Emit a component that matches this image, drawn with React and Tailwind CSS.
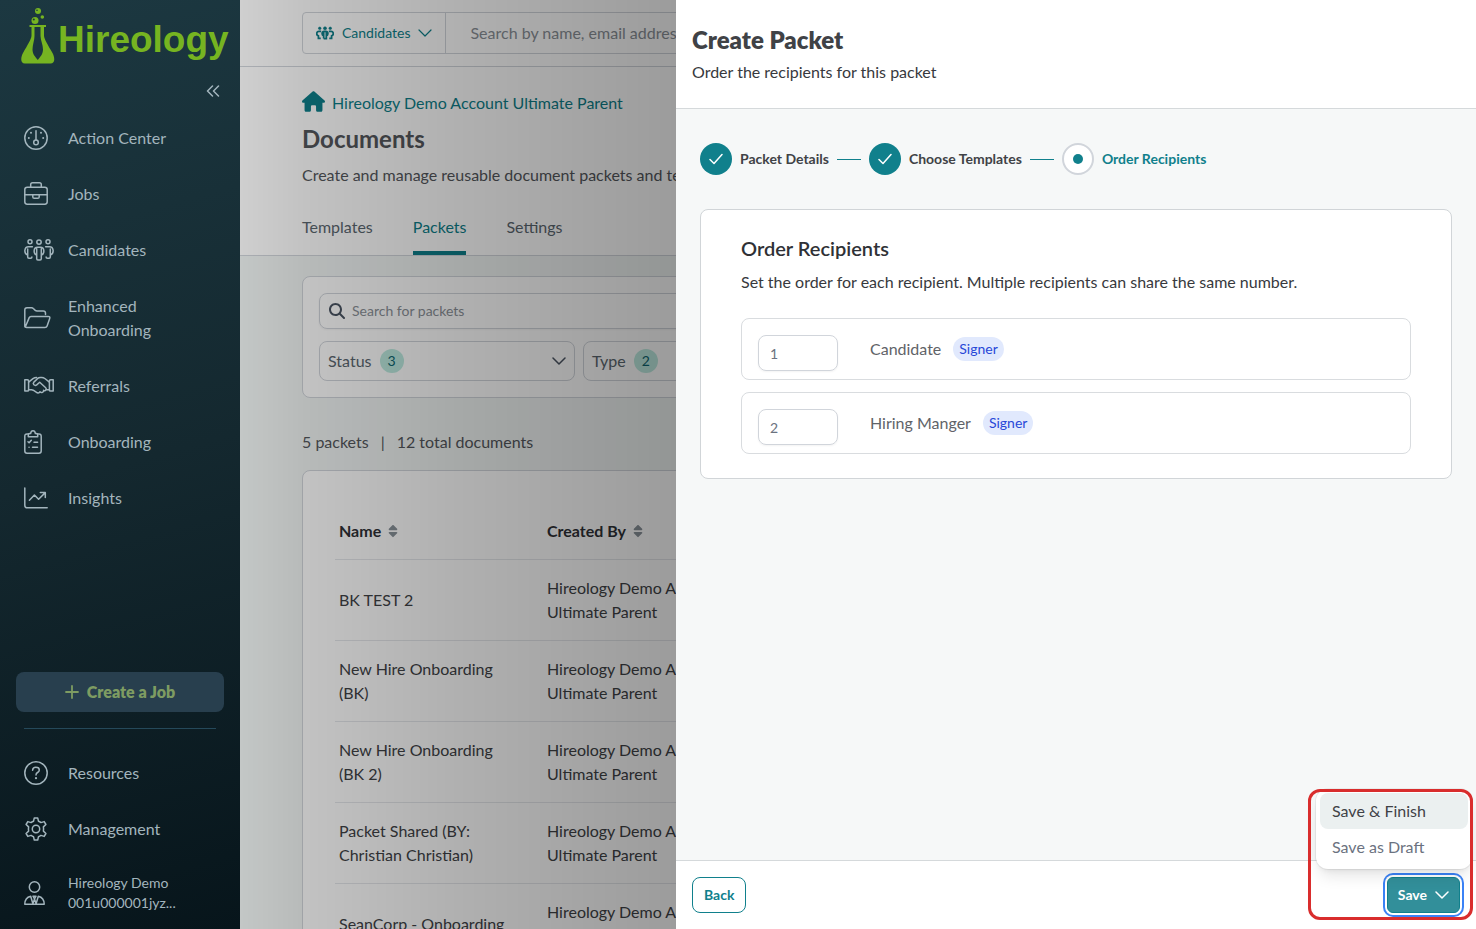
import React from "react";
import { FaHouse, FaMagnifyingGlass, FaSort } from "react-icons/fa6";

function Icon({ w, h, sw = 1.5, className = "", children }) {
  return (
    <svg
      width={w}
      height={h}
      viewBox={`0 0 ${w} ${h}`}
      fill="none"
      stroke="currentColor"
      strokeWidth={sw}
      strokeLinecap="round"
      strokeLinejoin="round"
      className={`shrink-0 ${className}`}
      aria-hidden="true"
    >
      {children}
    </svg>
  );
}

const GaugeIcon = () => (
  <Icon w={24} h={24}>
    <circle cx="12" cy="12" r="11.2" />
    <path d="M12 4.8v9" />
    <circle cx="12" cy="16.4" r="2.3" />
    <g fill="currentColor" stroke="none">
      <circle cx="7" cy="6.8" r="1" />
      <circle cx="17" cy="6.8" r="1" />
      <circle cx="4.8" cy="12" r="1" />
      <circle cx="19.2" cy="12" r="1" />
    </g>
  </Icon>
);

const BriefcaseIcon = () => (
  <Icon w={24} h={24}>
    <rect x="0.8" y="5.2" width="22.4" height="17" rx="2.4" />
    <path d="M6.7 5.2V2.600q0-1.800 1.800-1.800h7q1.800 0 1.800 1.800v2.600M.8 12.700h22.4M8.8 12.700v2.2q0 1.400 1.400 1.400h3.6q1.400 0 1.400-1.400v-2.2" />
  </Icon>
);

const PeopleIcon = () => (
  <Icon w={30} h={24}>
    <circle cx="6" cy="3.800" r="2" />
    <circle cx="15" cy="4.100" r="2.200" />
    <circle cx="24" cy="3.800" r="2" />
    <path d="M12.700 20.800q0 1.200 1.200 1.200h2.200q1.200 0 1.200-1.200V10.600M12.700 20.800V10.600M12.500 17.200C9.200 15.600 9.300 9.200 13.400 9.200h3.200c4.100 0 4.200 6.400.9 8" />
    <path d="M8.400 8.800H4.600C0 8.800-.4 15.600 3.700 17V19q0 1.200 1.200 1.200h1.800q1.200 0 1.200-1.200M3.700 17v-6M21.600 8.800h3.800C30 8.800 30.400 15.600 26.300 17V19q0 1.200-1.200 1.200h-1.800q-1.200 0-1.200-1.200M26.300 17v-6" />
  </Icon>
);

const FolderIcon = () => (
  <Icon w={27} h={24}>
    <path d="M.8 20.400V4Q.8 1.800 3 1.800h4.600q1 0 1.700.7l2 1.900q.7.600 1.700.6h6.300q2.200 0 2.200 2.200v1.200M1.200 21.200l4-9.600q.500-1.200 1.800-1.200h17.200q2.200 0 1.500 2l-2.600 7.600q-.500 1.600-2.200 1.600H2.600Q.800 21.600.800 20" />
  </Icon>
);

const HandshakeIcon = () => (
  <Icon w={30} h={24}>
    <path d="M.8 5.700h2.600q1.200 0 1.200 1.200v9q0 1.200-1.200 1.200H.8zM29.200 5.700h-2.600q-1.200 0-1.200 1.200v9q0 1.200 1.200 1.200h2.600z" />
    <path d="M4.600 8.200 9 4.700q1.600-1.200 3.600-1.200M25.400 8.200 20.800 4.500Q19.400 3.500 17.800 3.500h-1.600q-1.400 0-2.500 1l-3.800 3.600q-1.300 1.400 0 2.700 1.400 1.200 2.800.100l3-2.600 6 5.400q1.200 1.200.2 2.400-1 1.100-2.300.2.200 1.500-1.200 2.100-1.400.500-2.400-.7-.8 1.700-2.700 1.100L9.200 16.200 7.600 15.800H4.600M21.800 15.800h3.600" />
  </Icon>
);

const ClipboardIcon = () => (
  <Icon w={18} h={24}>
    <path d="M4.600 4H3Q.8 4 .8 6.200V21q0 2.200 2.200 2.200h12q2.200 0 2.200-2.200V6.200Q17.200 4 15 4h-1.600" />
    <path d="M4.300 6.700V5q0-1.400 1.400-1.400h.9Q7 .8 9 .8t2.400 2.800h.9q1.400 0 1.400 1.400v1.700z" />
    <path d="m4 11.700 1.100 1.100 2.200-2.500M10 12.200h3.600M8.500 17.200h5M5 17.200h.1" />
  </Icon>
);

const ChartIcon = () => (
  <Icon w={24} h={24}>
    <path d="M.8 2v17.200q0 2.600 2.600 2.600h19.800M5.400 14.200l5-5.200 4.200 4.200L21 6.900M16.300 6.600h5v5" />
  </Icon>
);

const QuestionIcon = () => (
  <Icon w={24} h={24}>
    <circle cx="12" cy="12" r="11.200" />
    <path d="M8.600 9.200q.2-2.900 3.200-2.900 3.500 0 3.500 2.700 0 1.500-1.700 2.500Q12 12.400 12 14" />
    <circle cx="12" cy="17.200" r="1.100" fill="currentColor" stroke="none" />
  </Icon>
);

const GearIcon = () => (
  <Icon w={24} h={24}>
    <circle cx="12" cy="12" r="3.700" />
    <path d="M10.300.9h3.400l.8 3.400q1.300.5 2.400 1.300l3.300-1 1.700 2.900-2.500 2.400q.3 2.100 0 4.200l2.500 2.400-1.700 2.900-3.300-1q-1.100.8-2.400 1.300l-.8 3.400h-3.400l-.8-3.400q-1.300-.5-2.400-1.300l-3.300 1-1.700-2.900 2.500-2.400q-.3-2.100 0-4.200L2.100 7.500l1.700-2.900 3.300 1q1.100-.8 2.400-1.300z" />
  </Icon>
);

const UserTieIcon = () => (
  <Icon w={21} h={24}>
    <circle cx="10.500" cy="6" r="5.200" />
    <path d="M6.700 15.200Q.8 16.600.8 23.200h19.400q0-6.600-5.900-8M6.700 15.200l2.200 7.600 1.600-4.800 1.600 4.800 2.200-7.600M9 15.200h3l-1.500 2.800z" />
  </Icon>
);

const ChevronDown = ({ sw = 1.5, className = "" }) => (
  <Icon w={14} h={8} sw={sw} className={className}>
    <path d="M1 1l6 6 6-6" />
  </Icon>
);

const FlaskLogo = () => (
  <svg width="35" height="56" viewBox="0 0 35 56" className="shrink-0" aria-hidden="true">
    <g fill="#76b421">
      <circle cx="17" cy="3" r="3" />
      <circle cx="21.300" cy="9" r="1.800" />
      <circle cx="14" cy="12.400" r="3.500" />
      <path
        fillRule="evenodd"
        d="M8.500 17h16.500v2H23v8.500c0 3.500 4 9.500 8.500 17.500 2.600 5 2.600 10.500-2 10.500H4c-4.600 0-4.600-5.500-2-10.500 4.500-8 8.500-14 8.500-17.500V19h-2zM13.500 19v9c0 4-2 9-2 13.500C11.500 46 14 48.500 16.800 52 19.500 48.500 22 46 22 41.500c0-4.500-2.500-9.500-2.500-13.500v-9z"
      />
    </g>
    <g fill="#1b3540">
      <circle cx="16" cy="2.300" r="0.800" />
      <circle cx="12.800" cy="11.400" r="1" />
    </g>
  </svg>
);

const navItems = [
  { label: "Action Center", Glyph: GaugeIcon },
  { label: "Jobs", Glyph: BriefcaseIcon },
  { label: "Candidates", Glyph: PeopleIcon },
  { label: "Enhanced Onboarding", Glyph: FolderIcon },
  { label: "Referrals", Glyph: HandshakeIcon },
  { label: "Onboarding", Glyph: ClipboardIcon },
  { label: "Insights", Glyph: ChartIcon },
];

function NavLink({ label, Glyph }) {
  return (
    <a href="#" className="flex items-center py-4 pl-6 pr-16">
      <span className="flex w-11 shrink-0 items-center">
        <Glyph />
      </span>
      <span>{label}</span>
    </a>
  );
}

function Sidebar() {
  return (
    <aside className="flex w-60 shrink-0 flex-col bg-linear-[165deg,#1c3841_0%,#14282f_50%,#07151b_100%] text-base leading-6 text-[#a3b5bd]">
      <div className="flex h-[67px] items-start gap-0.5 pl-[21px] pt-2 text-[#76b421]">
        <FlaskLogo />
        <span className="pt-2 font-['Liberation_Sans',Arial,sans-serif] text-[37px] leading-12 font-bold">
          Hireology
        </span>
      </div>
      <div className="flex h-[43px] justify-end pr-5">
        <button type="button" aria-label="Collapse menu" className="flex h-12 items-center">
          <Icon w={14} h={12}>
            <path d="M6.500 1l-5 5 5 5M12.500 1l-5 5 5 5" />
          </Icon>
        </button>
      </div>
      <nav className="flex flex-col">
        {navItems.map((item) => (
          <NavLink key={item.label} {...item} />
        ))}
      </nav>
      <div className="mt-auto flex flex-col">
        <button
          type="button"
          className="mx-4 flex h-10 items-center justify-center gap-2 rounded-lg bg-[#283f4e] font-extrabold text-[#7e9c62]"
        >
          <Icon w={14} h={14} sw={1.8}>
            <path d="M7 1v12M1 7h12" />
          </Icon>
          Create a Job
        </button>
        <hr className="mx-6 my-4 border-[#25495a]" />
        <NavLink label="Resources" Glyph={QuestionIcon} />
        <NavLink label="Management" Glyph={GearIcon} />
        <a href="#" className="flex items-center py-4 pl-6 text-sm leading-5">
          <span className="flex w-11 shrink-0">
            <UserTieIcon />
          </span>
          <span>
            Hireology Demo
            <br />
            001u000001jyz...
          </span>
        </a>
      </div>
    </aside>
  );
}

function FilterButton({ label, count }) {
  return (
    <button
      type="button"
      className="flex h-10 w-64 items-center gap-2 rounded-lg border border-[#d1d5db] px-2 text-[#5b6770]"
    >
      {label}
      <span className="flex size-6 items-center justify-center rounded-full bg-[#bdebe0] text-sm text-[#0d6670]">
        {count}
      </span>
      <ChevronDown className="ml-auto text-[#4b5563]" />
    </button>
  );
}

const packets = [
  "BK TEST 2",
  "New Hire Onboarding (BK)",
  "New Hire Onboarding (BK 2)",
  "Packet Shared (BY: Christian Christian)",
  "SeanCorp - Onboarding",
];

function SortHeader({ children, className = "" }) {
  return (
    <th scope="col" className={`px-1 pt-4 pb-4 text-left font-bold ${className}`}>
      <button type="button" className="flex items-center gap-[5px]">
        {children}
        <FaSort className="size-3.5 text-[#8a939a]" />
      </button>
    </th>
  );
}

function DocumentsPage() {
  return (
    <main className="flex min-w-0 flex-1 flex-col overflow-hidden bg-[#f1f5f4] text-base leading-6 text-[#54575c]">
      <div className="shrink-0 border-b border-[#d1d5db] bg-white px-[62px] py-3">
        <div className="flex h-[42px] rounded border border-[#d1d5db] text-[#0e7f8a]">
          <button type="button" className="flex items-center gap-2 border-r border-[#d1d5db] px-[13px] text-sm">
            <svg width="18" height="14" viewBox="0 0 30 24" fill="currentColor" stroke="currentColor" aria-hidden="true">
              <circle cx="6" cy="4" r="2.200" />
              <circle cx="15" cy="4" r="2.600" />
              <circle cx="24" cy="4" r="2.200" />
              <path
                fill="none"
                strokeWidth="3"
                d="M12.700 21.500h4.600V10M12.700 21.500V10M12.500 17C9 15.600 9.300 9.200 13.400 9.200h3.200c4.100 0 4.400 6.400.9 7.800M8.400 9H4.600C0 9-.4 15.600 3.700 17v4h4M21.600 9h3.800C30 9 30.400 15.600 26.300 17v4h-4"
              />
            </svg>
            <span>Candidates</span>
            <ChevronDown sw={1.2} />
          </button>
          <input
            type="search"
            aria-label="Search candidates"
            placeholder="Search by name, email address, or phone"
            className="min-w-0 flex-1 bg-transparent px-6 placeholder:text-[#8b9198]"
          />
        </div>
      </div>

      <header className="shrink-0 border-b border-[#d1d5db] bg-white px-[62px] pt-5">
        <a href="#" className="flex items-center gap-[7px] text-[#0e7f8a]">
          <FaHouse className="size-[23px]" />
          <span className="pt-1">Hireology Demo Account Ultimate Parent</span>
        </a>
        <h1 className="mt-2 text-2xl leading-8 font-bold">Documents</h1>
        <p className="mt-2">Create and manage reusable document packets and templates</p>
        <nav className="mt-4 flex gap-10 text-[#5b6770]">
          <a href="#" className="pt-3 pb-3">Templates</a>
          <a href="#" className="border-b-4 border-[#0e7f8a] pt-3 pb-3 text-[#0e7f8a]">Packets</a>
          <a href="#" className="pt-3 pb-3">Settings</a>
        </nav>
      </header>

      <section className="flex flex-col px-[62px] pt-5">
        <div className="flex flex-col gap-3 rounded-lg border border-[#d1d5db] bg-white p-4">
          <label className="flex h-9 items-center gap-[7px] rounded-lg border border-[#d1d5db] px-[9px] shadow-xs">
            <FaMagnifyingGlass className="size-4 text-[#4b5563]" aria-label="Search" />
            <input
              type="search"
              placeholder="Search for packets"
              className="min-w-0 flex-1 bg-transparent text-sm placeholder:text-[#8b9198]"
            />
          </label>
          <div className="flex gap-2">
            <FilterButton label="Status" count="3" />
            <FilterButton label="Type" count="2" />
          </div>
        </div>
        <div className="mt-8 flex gap-3">
          <span>5 packets</span>
          <span>|</span>
          <span>12 total documents</span>
        </div>
        <div className="mt-4 rounded-lg border border-[#d1d5db] bg-white p-8">
          <table className="w-full table-fixed border-collapse text-[#404246]">
            <thead className="text-[#2f3136]">
              <tr className="border-b border-[#e5e7eb]">
                <SortHeader className="w-52">Name</SortHeader>
                <SortHeader>Created By</SortHeader>
              </tr>
            </thead>
            <tbody>
              {packets.map((name) => (
                <tr key={name} className="border-b border-[#e5e7eb]">
                  <td className="py-4 pr-8 pl-1">{name}</td>
                  <td className="px-1 py-4">
                    Hireology Demo Account
                    <br />
                    Ultimate Parent
                  </td>
                </tr>
              ))}
            </tbody>
          </table>
        </div>
      </section>
    </main>
  );
}

function StepDone({ label }) {
  return (
    <li className="flex items-center gap-2">
      <span className="flex size-8 items-center justify-center rounded-full bg-[#10808c] text-white">
        <Icon w={14} h={12}>
          <path d="M1 6.500l4 4L13 1.500" />
        </Icon>
      </span>
      {label}
      <span className="h-px w-6 bg-[#10808c]" />
    </li>
  );
}

function RecipientRow({ id, order, name }) {
  return (
    <li className="flex items-start gap-8 rounded-lg border border-[#d9dcdf] px-4 pt-4 pb-2">
      <input
        id={id}
        type="text"
        inputMode="numeric"
        defaultValue={order}
        className="h-9 w-20 rounded-lg border border-[#d1d5db] px-[11px] text-sm text-[#6b7280] shadow-xs"
      />
      <div className="flex h-7 items-center gap-3">
        <label htmlFor={id} className="text-[#5f6368]">{name}</label>
        <span className="rounded-full bg-[#e1e9fd] px-1.5 text-sm leading-6 text-[#2848d8]">Signer</span>
      </div>
    </li>
  );
}

function PacketDrawer() {
  return (
    <section
      role="dialog"
      aria-labelledby="drawer-title"
      className="fixed inset-y-0 right-0 flex w-[800px] max-w-full flex-col bg-[#f6f8f8] text-base leading-6 text-[#37393d]"
    >
      <header className="border-b border-[#d5d9db] bg-white px-4 pt-6 pb-6">
        <h2 id="drawer-title" className="text-2xl leading-8 font-extrabold text-[#404246]">Create Packet</h2>
        <p className="mt-1">Order the recipients for this packet</p>
      </header>

      <div className="flex-1 px-6 pt-[34px]">
        <ol className="flex gap-2 text-sm font-bold text-[#404246]">
          <StepDone label="Packet Details" />
          <StepDone label="Choose Templates" />
          <li aria-current="step" className="flex items-center gap-2 text-[#10808c]">
            <span className="flex size-8 items-center justify-center rounded-full border-2 border-[#d1d5db] bg-white">
              <span className="size-2.5 rounded-full bg-[#10808c]" />
            </span>
            Order Recipients
          </li>
        </ol>

        <div className="mt-[34px] rounded-lg border border-[#d1d5d8] bg-white px-10 pt-6 pb-6">
          <h3 className="text-xl leading-7 font-semibold text-[#2f3136]">Order Recipients</h3>
          <p className="mt-2">Set the order for each recipient. Multiple recipients can share the same number.</p>
          <ul className="mt-6 flex flex-col gap-3">
            <RecipientRow id="order-candidate" order="1" name="Candidate" />
            <RecipientRow id="order-manager" order="2" name="Hiring Manger" />
          </ul>
        </div>
      </div>

      <footer className="relative flex items-center justify-between border-t border-[#d5d9db] bg-white p-4 text-sm font-bold">
        <button type="button" className="h-9 rounded-lg border border-[#10808c] px-[11px] text-[#10808c]">
          Back
        </button>
        <button
          type="button"
          aria-haspopup="menu"
          aria-expanded="true"
          className="flex h-9 items-center gap-2 rounded-md border border-[#10808c] bg-[#328f9a] px-2.5 text-white ring-2 ring-[#3b82f6] ring-offset-2"
        >
          Save
          <ChevronDown />
        </button>
        <div
          role="menu"
          className="absolute right-1 bottom-[60px] w-[156px] rounded-xl bg-white p-1 text-base font-normal shadow-lg ring-1 ring-black/5"
        >
          <button type="button" role="menuitem" className="block h-9 w-full rounded-lg bg-[#ebf0f0] px-3 text-left text-[#404246]">
            Save &amp; Finish
          </button>
          <button type="button" role="menuitem" className="block h-9 w-full rounded-lg px-3 text-left text-[#6b7280]">
            Save as Draft
          </button>
        </div>
        <div className="pointer-events-none absolute right-[3px] bottom-[9px] h-[131px] w-[165px] rounded-xl border-3 border-[#d92d2d]" />
      </footer>
    </section>
  );
}

export default function App() {
  return (
    <div className="flex h-screen overflow-hidden font-[Lato,sans-serif]">
      <Sidebar />
      <DocumentsPage />
      <div className="fixed inset-y-0 right-[800px] left-60 bg-linear-[90deg,rgba(0,0,0,0.19)_0%,rgba(0,0,0,0.24)_15%,rgba(0,0,0,0.31)_50%,rgba(0,0,0,0.39)_100%]" />
      <PacketDrawer />
    </div>
  );
}
